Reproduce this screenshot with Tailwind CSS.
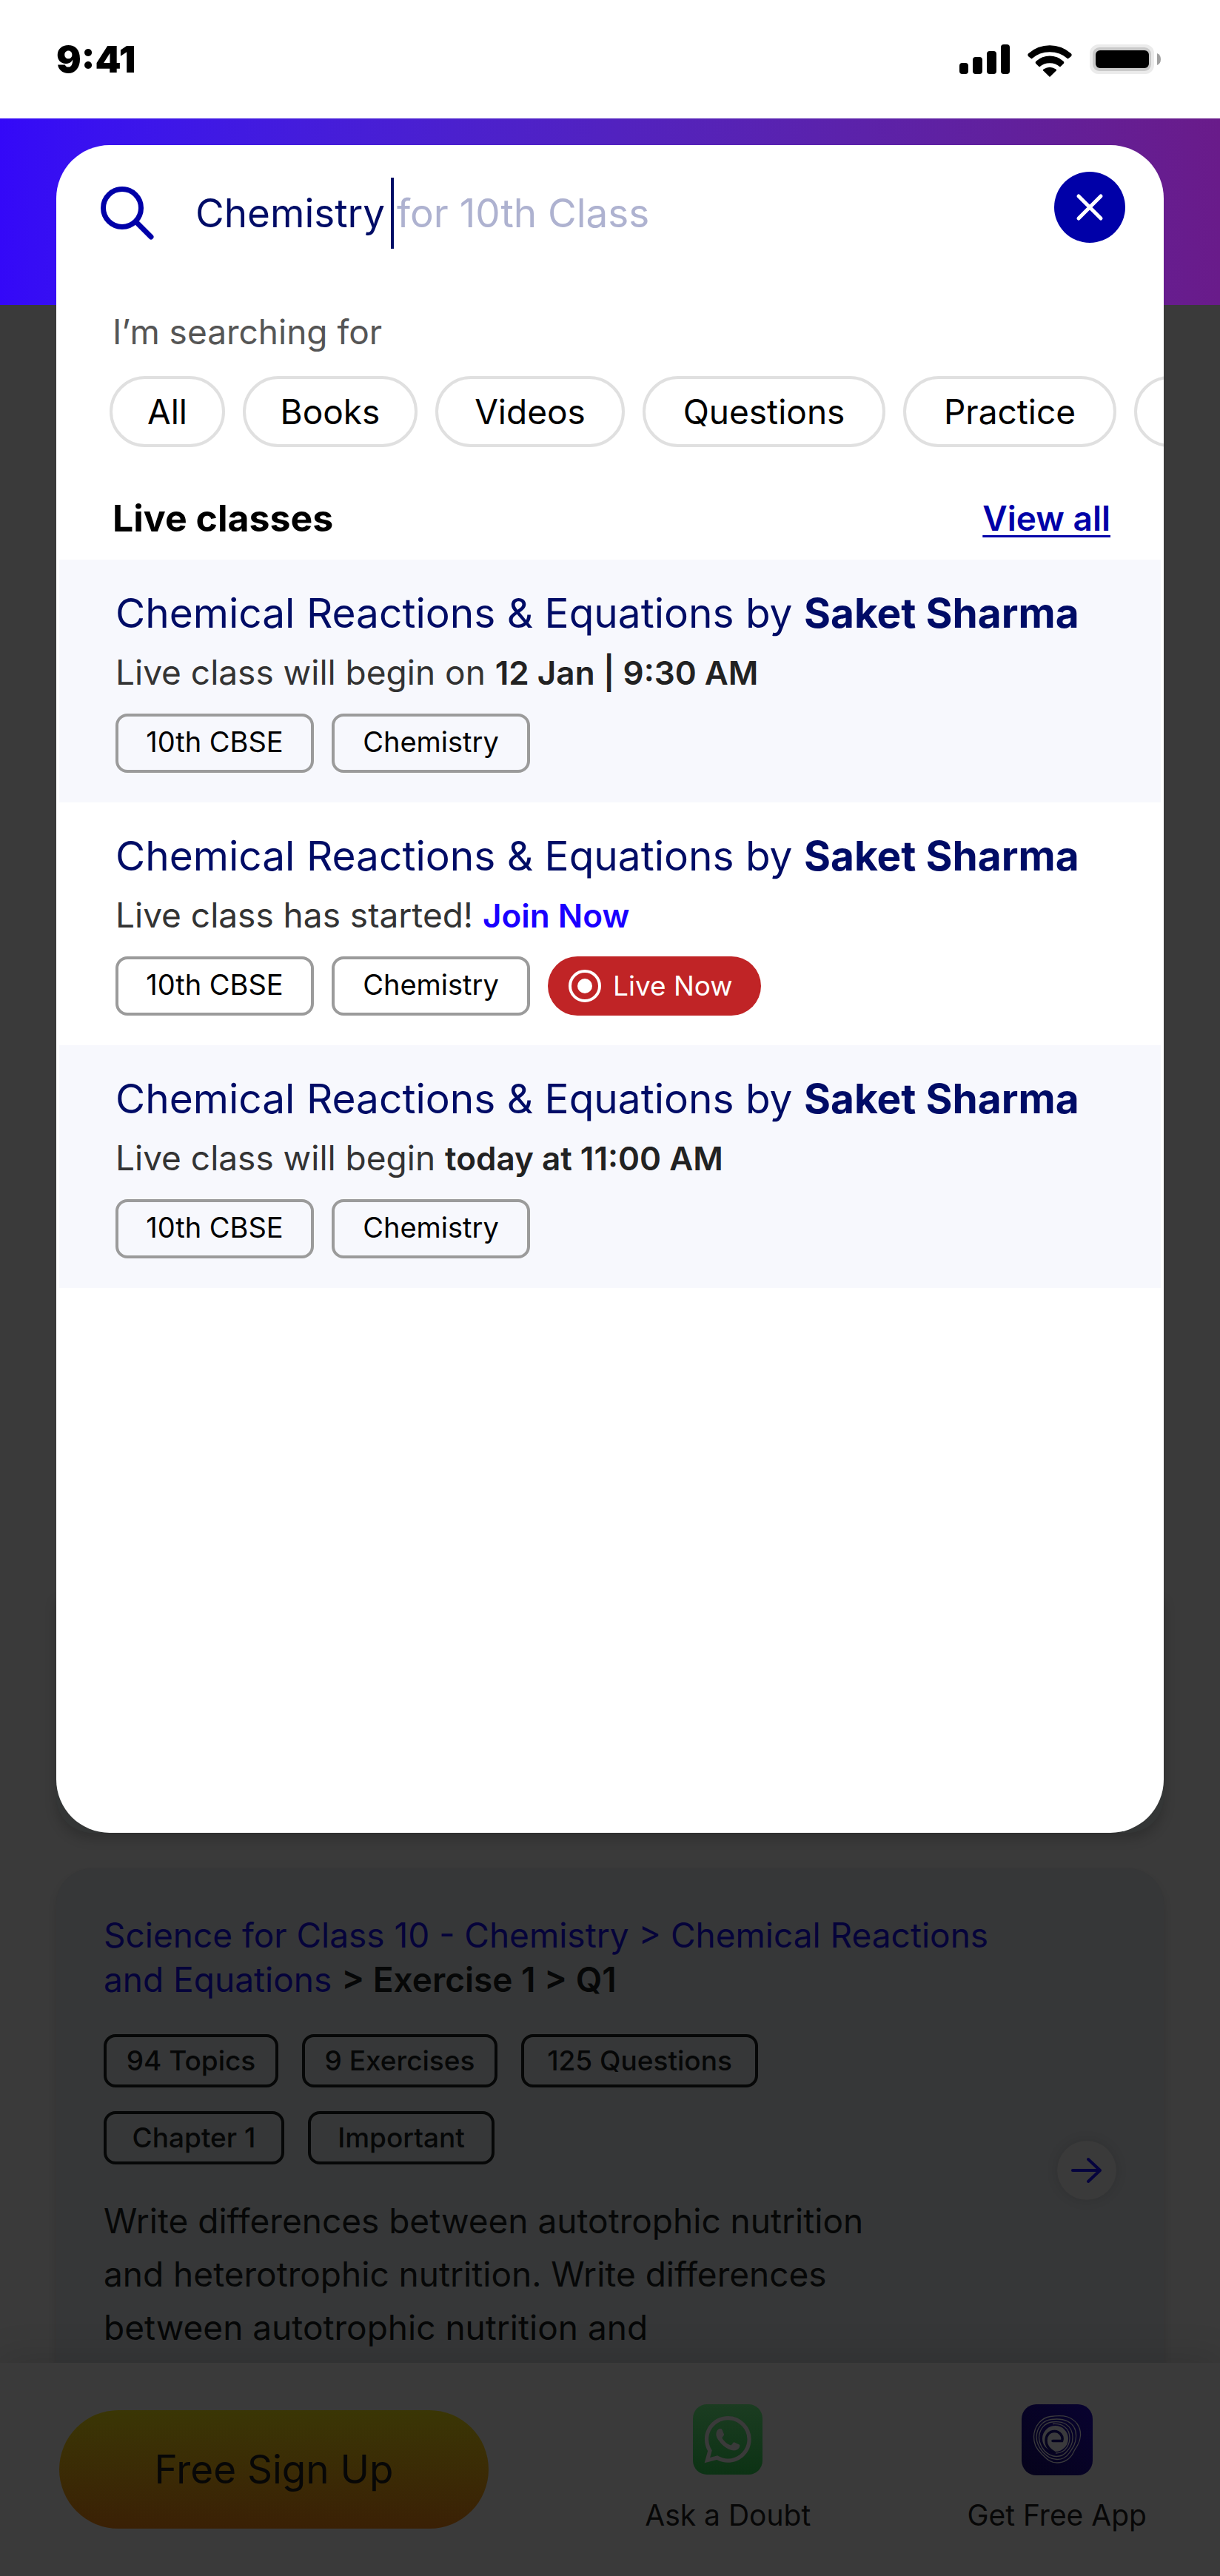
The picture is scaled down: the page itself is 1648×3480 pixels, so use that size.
<!DOCTYPE html>
<html lang="en">
<head>
<meta charset="utf-8">
<meta name="viewport" content="width=device-width, initial-scale=1">
<title>Search live classes</title>
<script src="https://cdn.jsdelivr.net/npm/@tailwindcss/browser@4"></script>
</head>
<body class="flex min-h-screen flex-col overflow-x-hidden bg-[#3a3a3a] font-[Inter,sans-serif] text-black">

<!-- Status bar -->
<div class="flex h-40 items-center justify-between bg-white pr-20 pl-[76px]">
  <span class="text-[50px] leading-[64px] font-black">9:41</span>
  <div class="flex items-center gap-6">
    <svg class="h-10 w-[68px]" viewBox="0 0 68 40" aria-hidden="true"><rect y="25" width="12" height="15" rx="4"/><rect x="18" y="17" width="13" height="23" rx="4"/><rect x="37" y="9" width="13" height="31" rx="4"/><rect x="56" width="12" height="40" rx="4"/></svg>
    <svg class="mt-1 h-11 w-[60px]" viewBox="0 0 60 44" aria-hidden="true"><path d="M1.500 16.500Q-.8 14.600 1.200 12.200A43 43 0 0 1 58.800 12.200Q60.800 14.600 58.500 16.500L54.500 19.500A37 37 0 0 0 5.500 19.500ZM11.800 26.500Q9.600 24.700 11.800 22.500A27 27 0 0 1 48.200 22.500Q50.400 24.700 48.200 26.500L44 30.500A21 21 0 0 0 16 30.500ZM21.800 36Q19.800 34.500 22 33.300A15 15 0 0 1 38 33.300Q40.200 34.500 38.200 36L30 44Z"/></svg>
    <svg class="h-10 w-24" viewBox="0 0 96 40" aria-hidden="true"><rect width="87" height="40" rx="12" fill="#ebebeb"/><rect x="4" y="4" width="79" height="32" rx="9" fill="#c9c9c9"/><rect x="8" y="8" width="72" height="24" rx="6"/><path d="M91 12Q96 14 96 20T91 28Z" fill="#a0a0a0"/></svg>
  </div>
</div>

<main class="relative flex flex-1 flex-col px-[76px] pt-9">
  <div class="absolute inset-x-0 top-0 h-63 bg-linear-to-r from-[#3408f8] to-[#691b8a]"></div>

  <!-- Search sheet -->
  <div class="relative mb-12">
    <div class="absolute inset-x-0 bottom-0 h-80 rounded-b-[48px] bg-[#343636] shadow-[0_8px_16px_rgba(0,0,0,0.18)]"></div>
    <section class="relative overflow-hidden rounded-[72px] bg-white pb-[736px]" aria-label="Search">
      <form class="flex items-start pt-9 pr-[52px] pl-15">
        <label for="q" class="mt-2 flex h-24 w-32 shrink-0 items-center" aria-label="Search">
          <svg class="size-[72px]" viewBox="0 0 72 72" fill="none" stroke="#0000a8" stroke-width="7" stroke-linecap="round" aria-hidden="true"><circle cx="29" cy="29" r="25.500"/><path d="M48 48 68 68"/></svg>
        </label>
        <div class="mt-2 flex h-24 flex-1 items-center text-[53px] leading-[64px]">
          <input id="q" type="text" value="Chemistry" class="h-24 w-[264px] bg-transparent text-[#000c66] caret-transparent outline-none">
          <span class="h-24 w-1 bg-[#000c66]"></span>
          <span class="ml-1 text-[#aeb2d0]">for 10th Class</span>
        </div>
        <button type="button" aria-label="Close" class="flex size-24 items-center justify-center rounded-full bg-[#0000a8]">
          <svg class="size-10" viewBox="0 0 40 40" fill="none" stroke="#fff" stroke-width="5" stroke-linecap="round" aria-hidden="true"><path d="M5 5 35 35M35 5 5 35"/></svg>
        </button>
      </form>

      <p class="mt-[84px] pl-[76px] text-[46px] leading-[56px] text-[#555]">I’m searching for</p>
      <div class="mt-8 flex gap-6 pl-[72px] text-[46px] leading-[56px]">
        <button type="button" class="h-24 w-[156px] shrink-0 rounded-full border-4 border-[#e0e0e0]">All</button>
        <button type="button" class="h-24 w-[236px] shrink-0 rounded-full border-4 border-[#e0e0e0]">Books</button>
        <button type="button" class="h-24 w-[256px] shrink-0 rounded-full border-4 border-[#e0e0e0]">Videos</button>
        <button type="button" class="h-24 w-[328px] shrink-0 rounded-full border-4 border-[#e0e0e0]">Questions</button>
        <button type="button" class="h-24 w-[288px] shrink-0 rounded-full border-4 border-[#e0e0e0]">Practice</button>
        <button type="button" aria-label="More" class="h-24 w-[240px] shrink-0 rounded-full border-4 border-[#e0e0e0]"></button>
      </div>

      <div class="mt-16 flex items-center justify-between pr-[72px] pl-[76px] leading-[64px]">
        <h2 class="text-[50px] font-bold">Live classes</h2>
        <a href="#" class="text-[46px] font-semibold text-[#0000a8] underline decoration-3 underline-offset-6">View all</a>
      </div>

      <ul class="mx-1 mt-6">
        <li class="bg-[#f7f8fd] px-19 pt-9 pb-10">
          <h3 class="text-[55px] leading-[72px] text-[#000c66]">Chemical Reactions &amp; Equations by <b class="font-bold">Saket Sharma</b></h3>
          <p class="mt-4 text-[46px] leading-[56px] text-[#333]">Live class will begin on <b class="text-[44px] leading-none font-semibold text-[#222]">12 Jan | 9:30 AM</b></p>
          <div class="mt-7 flex gap-6 text-[38px] leading-[48px]">
            <span class="flex h-20 w-[268px] items-center justify-center rounded-2xl border-4 border-[#9b9b9b] pb-1">10th CBSE</span>
            <span class="flex h-20 w-[268px] items-center justify-center rounded-2xl border-4 border-[#9b9b9b] pb-1">Chemistry</span>
          </div>
        </li>
        <li class="px-19 pt-9 pb-10">
          <h3 class="text-[55px] leading-[72px] text-[#000c66]">Chemical Reactions &amp; Equations by <b class="font-bold">Saket Sharma</b></h3>
          <p class="mt-4 text-[46px] leading-[56px] text-[#333]">Live class has started! <a href="#" class="text-[44px] leading-none font-semibold text-[#1a00ff]">Join Now</a></p>
          <div class="mt-7 flex gap-6 text-[38px] leading-[48px]">
            <span class="flex h-20 w-[268px] items-center justify-center rounded-2xl border-4 border-[#9b9b9b] pb-1">10th CBSE</span>
            <span class="flex h-20 w-[268px] items-center justify-center rounded-2xl border-4 border-[#9b9b9b] pb-1">Chemistry</span>
            <span class="flex h-20 w-72 items-center gap-4 rounded-full bg-[#c02426] pl-7 text-[37px] text-white">
              <svg class="size-11" viewBox="0 0 44 44" fill="none" aria-hidden="true"><circle cx="22" cy="22" r="20" stroke="#fff" stroke-width="4"/><circle cx="22" cy="22" r="10" fill="#fff"/></svg>
              Live Now
            </span>
          </div>
        </li>
        <li class="bg-[#f7f8fd] px-19 pt-9 pb-10">
          <h3 class="text-[55px] leading-[72px] text-[#000c66]">Chemical Reactions &amp; Equations by <b class="font-bold">Saket Sharma</b></h3>
          <p class="mt-4 text-[46px] leading-[56px] text-[#333]">Live class will begin <b class="text-[44px] leading-none font-semibold text-[#222]">today at 11:00 AM</b></p>
          <div class="mt-7 flex gap-6 text-[38px] leading-[48px]">
            <span class="flex h-20 w-[268px] items-center justify-center rounded-2xl border-4 border-[#9b9b9b] pb-1">10th CBSE</span>
            <span class="flex h-20 w-[268px] items-center justify-center rounded-2xl border-4 border-[#9b9b9b] pb-1">Chemistry</span>
          </div>
        </li>
      </ul>
    </section>
  </div>

  <!-- Dimmed question card -->
  <article class="relative flex-1 rounded-t-[48px] bg-[#363738] px-16 pt-15 pb-3 text-[#060707] shadow-[0_8px_12px_rgba(0,0,0,0.12)]">
    <h2 class="text-[46px] leading-[60px] text-[#05033a]"><a href="#">Science for Class 10 - Chemistry &gt; Chemical Reactions<br>and Equations</a> <b class="font-semibold text-[#060707]">&gt; Exercise 1 &gt; Q1</b></h2>
    <div class="mt-11 flex items-start justify-between">
      <div>
        <div class="flex gap-8 text-[37px] leading-[48px] font-medium">
          <span class="flex h-18 w-[236px] items-center justify-center rounded-2xl border-4 border-[#060707]">94 Topics</span>
          <span class="flex h-18 w-[264px] items-center justify-center rounded-2xl border-4 border-[#060707]">9 Exercises</span>
          <span class="flex h-18 w-[320px] items-center justify-center rounded-2xl border-4 border-[#060707]">125 Questions</span>
        </div>
        <div class="mt-8 flex gap-8 text-[37px] leading-[48px] font-medium">
          <span class="flex h-18 w-[244px] items-center justify-center rounded-2xl border-4 border-[#060707]">Chapter 1</span>
          <span class="flex h-18 w-[252px] items-center justify-center rounded-2xl border-4 border-[#060707]">Important</span>
        </div>
        <p class="mt-10 text-[46px] leading-[72px]">Write differences between autotrophic nutrition<br>and heterotrophic nutrition. Write differences<br>between autotrophic nutrition and</p>
      </div>
      <button type="button" aria-label="Open question" class="mt-36 flex size-20 shrink-0 items-center justify-center rounded-full bg-[#3a3a3a] shadow-[0_0_16px_rgba(0,0,0,0.12)]">
        <svg class="h-9 w-11" viewBox="0 0 44 36" fill="none" stroke="#05033e" stroke-width="4" stroke-linecap="round" stroke-linejoin="round" aria-hidden="true"><path d="M3 18H40M24 3 40 18 24 33"/></svg>
      </button>
    </div>
  </article>
</main>

<!-- Dimmed bottom bar -->
<footer class="relative flex h-72 items-start justify-between bg-[#3a3a3a] pr-[99px] pl-20 text-[#070707] shadow-[0_-4px_48px_rgba(0,0,0,0.15)]">
  <button type="button" class="mt-16 h-40 w-[580px] rounded-full bg-linear-to-b from-[#3a3605] to-[#3a2005] text-[53px] leading-[64px]">Free Sign Up</button>
  <a href="#" class="mt-14 flex flex-col items-center gap-7 text-[39px] leading-[52px]">
    <svg class="size-24" viewBox="0 0 96 96" aria-hidden="true">
      <defs><linearGradient id="wa" x1="0" y1="0" x2="0" y2="1"><stop stop-color="#1b3c21"/><stop offset="1" stop-color="#0c3214"/></linearGradient></defs>
      <rect x="1" width="94" height="95" rx="19" fill="url(#wa)"/>
      <path transform="translate(16.500 16) scale(2.640)" fill="#3a3a3a" d="M17.472 14.382c-.297-.149-1.758-.867-2.030-.967-.273-.099-.471-.148-.670.150-.197.297-.767.966-.940 1.164-.173.199-.347.223-.644.075-.297-.150-1.255-.463-2.390-1.475-.883-.788-1.480-1.761-1.653-2.059-.173-.297-.018-.458.130-.606.134-.133.298-.347.446-.520.149-.174.198-.298.298-.497.099-.198.050-.371-.025-.520-.075-.149-.669-1.612-.916-2.207-.242-.579-.487-.500-.669-.510-.173-.008-.371-.010-.570-.010-.198 0-.520.074-.792.372-.272.297-1.040 1.016-1.040 2.479 0 1.462 1.065 2.875 1.213 3.074.149.198 2.096 3.200 5.077 4.487.709.306 1.262.489 1.694.625.712.227 1.360.195 1.871.118.571-.085 1.758-.719 2.006-1.413.248-.694.248-1.289.173-1.413-.074-.124-.272-.198-.570-.347m-5.421 7.403h-.004a9.870 9.870 0 0 1-5.031-1.378l-.361-.214-3.741.982.998-3.648-.235-.374a9.860 9.860 0 0 1-1.510-5.260c.001-5.450 4.436-9.884 9.888-9.884 2.640 0 5.122 1.030 6.988 2.898a9.825 9.825 0 0 1 2.893 6.994c-.003 5.450-4.437 9.884-9.885 9.884m8.413-18.297A11.815 11.815 0 0 0 12.050 0C5.495 0 .160 5.335.157 11.892c0 2.096.547 4.142 1.588 5.945L.057 24l6.305-1.654a11.882 11.882 0 0 0 5.683 1.448h.005c6.554 0 11.890-5.335 11.893-11.893a11.821 11.821 0 0 0-3.480-8.413Z"/>
    </svg>
    Ask a Doubt
  </a>
  <a href="#" class="mt-14 flex flex-col items-center gap-7 text-[39px] leading-[52px]">
    <svg class="size-24" viewBox="0 0 96 96" fill="none" aria-hidden="true">
      <defs><linearGradient id="ap" x1="0" y1="1" x2="1" y2="0"><stop stop-color="#05031a"/><stop offset="1" stop-color="#080230"/></linearGradient></defs>
      <rect width="96" height="96" rx="20" fill="url(#ap)"/>
      <g stroke="#3a3a3c" stroke-width="1.300">
        <path d="M39 16.500C46 15.500 57 15.500 62 17C73 21 80 30 79.500 42C79 54 74 56 70 65C66 74 57 79 48 79C38 79 33 73 27 67C20 60 16.500 54 16.500 44C17 29 27 18 39 16.500Z"/>
        <path d="M40 20.500C48 19.500 56 20 62 23C70 27 74 35 73.500 44C73 54 69 59 65 65C61 71 55 74.500 48 74.500C39 74.500 34 70 29 65C23 58 20 52 20 44C21 30 29 22 40 20.500Z"/>
        <path d="M41 24C49 23 55 24 60 27C66 31 69 37 69 45C69 53 66 59 61 64C57 69 53 70.500 47 70.500C40 70.500 35 67 31 63C26 57 23.500 51 23.500 45C24 33 31 25.500 41 24Z"/>
        <path d="M42 26.500C49 26 54 27 58 30.500C63 34 65 39 65 46C65 53 62 58 58 62C54 65 51 66 46 66"/>
      </g>
      <ellipse cx="45.500" cy="46.500" rx="17.500" ry="17.500" fill="#3a3a3c"/>
      <path d="M42 49.500H54.500C57 43 51 36.500 44.500 36.500C37 36.500 33 42 33 49C33 56 37 61 44 65" stroke="#05031f" stroke-width="3.500" stroke-linecap="round"/>
    </svg>
    Get Free App
  </a>
</footer>
</body>
</html>
